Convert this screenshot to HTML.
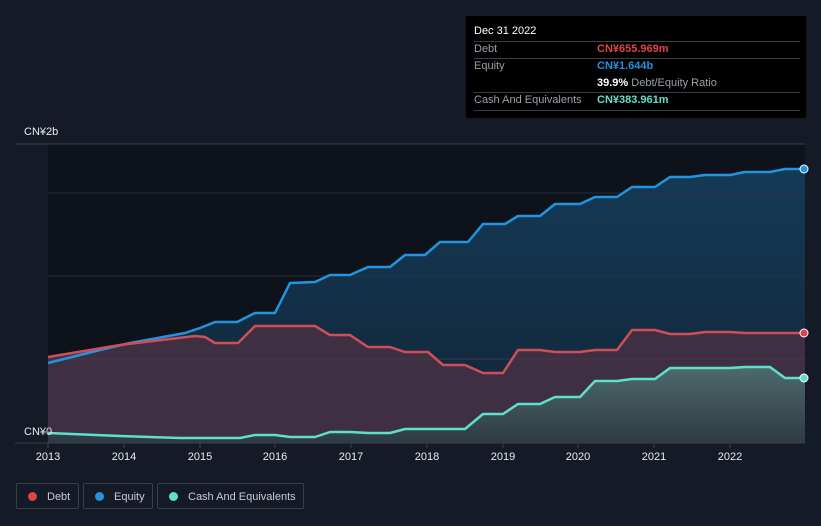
<!DOCTYPE html>
<html><head><style>
body{margin:0;width:821px;height:526px;background:#151b26;font-family:"Liberation Sans",sans-serif;overflow:hidden;position:relative}
.tt{position:absolute;left:466px;top:16px;width:340px;height:102px;background:#000}
.tt div{position:absolute;font-size:11px}
.ln{position:absolute;left:8px;width:326px;height:1px;background:#3a3f47}
.lg{position:absolute;top:483px;height:26px;border:1px solid #3a404a;border-radius:2px;color:#c8ccd2;font-size:11px;line-height:26px;box-sizing:border-box}
.lg i{display:inline-block;width:9px;height:9px;border-radius:50%;margin:0 10px 0 11px;vertical-align:-1px}
</style></head><body>
<svg width="821" height="526" style="position:absolute;left:0;top:0">
<defs>
<linearGradient id="eg" x1="0" y1="0" x2="0" y2="1"><stop offset="0" stop-color="#153a56"/><stop offset="1" stop-color="#112436"/></linearGradient>
<linearGradient id="cg" x1="0" y1="0" x2="0" y2="1"><stop offset="0" stop-color="#4d6a6c"/><stop offset="1" stop-color="#2e3a42"/></linearGradient>
</defs>
<rect x="48" y="144" width="757" height="299" fill="#0e121a"/>
<polygon fill="url(#eg)" points="48,443 48,363 100,350 130,343 185,333 200,328 215,322 237,322 255,313 275,313 290,283 315,282 330,275 350,275 368,267 390,267 405,255 425,255 440,242 468,242 483,224 505,224 518,216 540,216 555,204 580,204 595,197 617,197 632,187 655,187 670,177 690,177 705,175 730,175 745,172 770,172 785,169 805,169 805,443"/>
<polygon fill="#3e3042" points="48,443 48,357 120,345 195,336 205,337 215,343 238,343 255,326 315,326 330,335 350,335 368,347 390,347 405,352 428,352 443,365 465,365 483,373 503,373 518,350 540,350 555,352 580,352 595,350 617,350 632,330 655,330 670,334 690,334 705,332 730,332 745,333 805,333 805,443"/>
<polygon fill="url(#cg)" points="48,443 48,433 120,436 180,438 240,438 255,435 275,435 290,437 315,437 330,432 350,432 368,433 390,433 405,429 465,429 483,414 503,414 518,404 540,404 555,397 580,397 595,381 617,381 632,379 655,379 670,368 730,368 745,367 770,367 785,378 805,378 805,443"/>
<line x1="15" y1="144" x2="805" y2="144" stroke="#3a3f48"/>
<line x1="48" y1="193" x2="805" y2="193" stroke="#2a3442" stroke-opacity=".8"/>
<line x1="48" y1="276" x2="805" y2="276" stroke="#2a3442" stroke-opacity=".8"/>
<line x1="48" y1="359" x2="805" y2="359" stroke="#4a3a48" stroke-opacity=".8"/>
<g fill="none" stroke-width="2.5" stroke-linejoin="round">
<polyline stroke="#2394e0" points="48,363 100,350 130,343 185,333 200,328 215,322 237,322 255,313 275,313 290,283 315,282 330,275 350,275 368,267 390,267 405,255 425,255 440,242 468,242 483,224 505,224 518,216 540,216 555,204 580,204 595,197 617,197 632,187 655,187 670,177 690,177 705,175 730,175 745,172 770,172 785,169 805,169"/>
<polyline stroke="#cf4e5a" points="48,357 120,345 195,336 205,337 215,343 238,343 255,326 315,326 330,335 350,335 368,347 390,347 405,352 428,352 443,365 465,365 483,373 503,373 518,350 540,350 555,352 580,352 595,350 617,350 632,330 655,330 670,334 690,334 705,332 730,332 745,333 805,333"/>
<polyline stroke="#5ee0cc" points="48,433 120,436 180,438 240,438 255,435 275,435 290,437 315,437 330,432 350,432 368,433 390,433 405,429 465,429 483,414 503,414 518,404 540,404 555,397 580,397 595,381 617,381 632,379 655,379 670,368 730,368 745,367 770,367 785,378 805,378"/>
</g>
<circle cx="804" cy="169" r="4" fill="#2394e0" stroke="#fff" stroke-width="1"/>
<circle cx="804" cy="333" r="4" fill="#e0424b" stroke="#fff" stroke-width="1"/>
<circle cx="804" cy="378" r="4" fill="#5ee0cc" stroke="#fff" stroke-width="1"/>
<line x1="15" y1="443" x2="805" y2="443" stroke="#3a3f48"/>
<g stroke="#3a3f48"><line x1="48" y1="443" x2="48" y2="448"/><line x1="124" y1="443" x2="124" y2="448"/><line x1="200" y1="443" x2="200" y2="448"/><line x1="275" y1="443" x2="275" y2="448"/><line x1="351" y1="443" x2="351" y2="448"/><line x1="427" y1="443" x2="427" y2="448"/><line x1="503" y1="443" x2="503" y2="448"/><line x1="578" y1="443" x2="578" y2="448"/><line x1="654" y1="443" x2="654" y2="448"/><line x1="730" y1="443" x2="730" y2="448"/></g>
<g fill="#e8eaed" font-size="11" text-anchor="middle" font-family="Liberation Sans">
<text x="48" y="460">2013</text><text x="124" y="460">2014</text><text x="200" y="460">2015</text><text x="275" y="460">2016</text><text x="351" y="460">2017</text><text x="427" y="460">2018</text><text x="503" y="460">2019</text><text x="578" y="460">2020</text><text x="654" y="460">2021</text><text x="730" y="460">2022</text>
</g>
<text x="24" y="135" fill="#e8eaed" font-size="11" font-family="Liberation Sans">CN¥2b</text>
<text x="24" y="435" fill="#e8eaed" font-size="11" font-family="Liberation Sans">CN¥0</text>
</svg>
<div class="tt">
<div style="left:8px;top:9px;color:#fff">Dec 31 2022</div>
<div class="ln" style="top:25px"></div>
<div style="left:8px;top:27px;color:#9ba0a8">Debt</div><div style="left:131px;top:27px;color:#e0424b;font-weight:bold">CN¥655.969m</div>
<div class="ln" style="top:42px"></div>
<div style="left:8px;top:44px;color:#9ba0a8">Equity</div><div style="left:131px;top:44px;color:#2394e0;font-weight:bold">CN¥1.644b</div>
<div style="left:131px;top:61px;color:#9ba0a8"><b style="color:#fff">39.9%</b> Debt/Equity Ratio</div>
<div class="ln" style="top:76px"></div>
<div style="left:8px;top:78px;color:#9ba0a8">Cash And Equivalents</div><div style="left:131px;top:78px;color:#5ee0cc;font-weight:bold">CN¥383.961m</div>
<div class="ln" style="top:94px"></div>
</div>
<div class="lg" style="left:16px;width:63px"><i style="background:#e0424b"></i>Debt</div>
<div class="lg" style="left:83px;width:70px"><i style="background:#2394e0"></i>Equity</div>
<div class="lg" style="left:157px;width:147px"><i style="background:#5ee0cc"></i>Cash And Equivalents</div>
</body></html>
